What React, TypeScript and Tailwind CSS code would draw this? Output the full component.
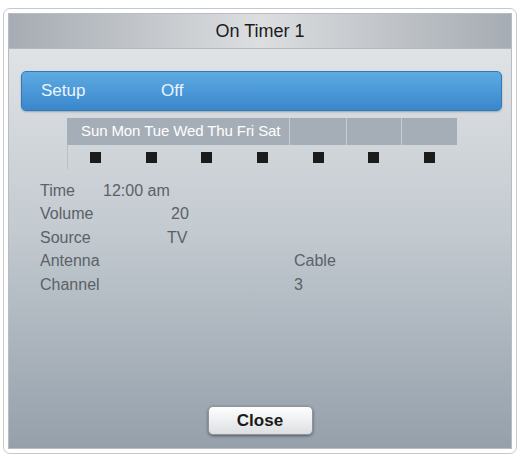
const days = ['Sun', 'Mon', 'Tue', 'Wed', 'Thu', 'Fri', 'Sat']

const rows = [
  { label: 'Time', value: '12:00 am', labelWidth: 'w-[63px]' },
  { label: 'Volume', value: '20', labelWidth: 'w-[131px]' },
  { label: 'Source', value: 'TV', labelWidth: 'w-[127px]' },
  { label: 'Antenna', value: 'Cable', labelWidth: 'w-[254px]' },
  { label: 'Channel', value: '3', labelWidth: 'w-[254px]' },
]

export default function App() {
  return (
    <div
      className="min-h-[456px] w-[520px] bg-white pl-[3px] pt-[8px]"
      style={{ fontFamily: '"Liberation Sans", Arial, sans-serif' }}
    >
      <div className="h-[446px] w-[514px] rounded-[7px] border border-[#c6c9cc] bg-white p-[4px]">
        <div className="flex h-full flex-col border border-[#b9bdc1] bg-gradient-to-b from-[#e6e8ea] via-[#c3cad0] to-[#95a0ab]">
          <div className="flex h-[35px] shrink-0 items-center justify-center border-b border-[#b4b9be] bg-gradient-to-r from-[#a6acb3] via-[#dcdee0] to-[#a6acb3] text-[18px] text-[#1c1c1c]">
            On Timer 1
          </div>

          <div className="ml-[12px] mr-[9px] mt-[22px] flex h-[40px] items-center rounded-[5px] border border-[#3079bb] bg-gradient-to-b from-[#5eaae2] to-[#3987cc] pl-[19px] text-[17px] text-[#eaf5ff] shadow-[0_1px_2px_rgba(0,0,0,0.25)]">
            <span className="w-[120px]">Setup</span>
            <span>Off</span>
          </div>

          <div className="ml-[58px] mt-[7px] w-[390px]">
            <div className="flex h-[27px] bg-[#a5aeb7] text-white">
              <div className="flex w-[223px] items-center border-r border-[#c8cdd2] pl-[14px] text-[15px] tracking-[-0.1px]">
                {days.join(' ')}
              </div>
              <div className="w-[57px] border-r border-[#c8cdd2]" />
              <div className="w-[55px] border-r border-[#c8cdd2]" />
              <div className="flex-1" />
            </div>
            <div className="grid h-[24px] grid-cols-7 border-l border-[#b9bfc5]">
              {days.map((day) => (
                <div key={day} className="flex items-center justify-center">
                  <div className="h-[11px] w-[11px] bg-[#1b1b1b]" />
                </div>
              ))}
            </div>
          </div>

          <div className="ml-[31px] mt-[10px] flex flex-col text-[16px] text-[#5b6168]">
            {rows.map((row) => (
              <div key={row.label} className="flex h-[23.5px] items-center">
                <span className={row.labelWidth}>{row.label}</span>
                <span>{row.value}</span>
              </div>
            ))}
          </div>

          <div className="mb-[13px] mt-auto flex justify-center">
            <button
              type="button"
              className="h-[29px] w-[105px] rounded-[5px] border border-[#8d949b] bg-gradient-to-b from-white to-[#dcdfe2] text-[17px] font-bold text-[#1a1a1a] shadow-[0_1px_3px_rgba(0,0,0,0.45)]"
            >
              Close
            </button>
          </div>
        </div>
      </div>
    </div>
  )
}
